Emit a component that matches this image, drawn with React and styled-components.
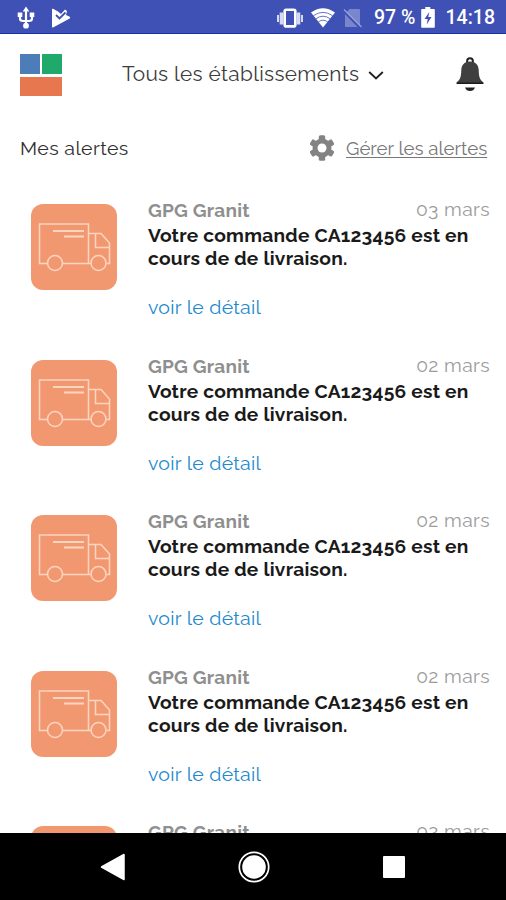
import React from 'react'
import styled, { createGlobalStyle } from 'styled-components'

const alerts = [
    { id: 1, date: '03 mars' },
    { id: 2, date: '02 mars' },
    { id: 3, date: '02 mars' },
    { id: 4, date: '02 mars' },
    { id: 5, date: '02 mars' },
]

const UsbIcon = () => (
    <svg width="18" height="24" viewBox="0 0 18 24" fill="none" stroke="#fff" strokeWidth="2.2">
        <path d="M9 4v15M3 9v3.5q0 2.5 3 2.5h6q3 0 3-2.5V9" />
        <path d="M9 .5l3.3 5H5.7zM.7 6.5h4.6v4.5H.7zM12.7 6.5h4.6v4.5h-4.6z" fill="#fff" stroke="none" />
        <circle cx="9" cy="19.7" r="2.9" fill="#fff" stroke="none" />
    </svg>
)

const PlayIcon = () => (
    <svg width="20" height="20" viewBox="0 0 20 20">
        <path d="M2 .8L7 3.5l3 2.5L14 1.5l2 1.5-1 4 3.7 1.8q1 .8 0 1.6L2.500 19.3q-1.5.7-1.5-.8V1.500q0-1.200 1-.7z" fill="#fff" />
        <path d="M5 7l3.500 3.500L14.500 4.500" fill="none" stroke="#3f51b5" strokeWidth="1.8" />
    </svg>
)

const VibrateIcon = () => (
    <svg width="26" height="20" viewBox="0 0 26 20">
        <path d="M0 7h2v7H0zM2.700 4.500h3.600v12H2.700zM19.700 4.500h3.600v12h-3.600zM24 7h2v7h-2z" fill="#d5daf4" />
        <rect x="7.700" y="1.800" width="10.600" height="16.600" rx="1.500" fill="none" stroke="#fff" strokeWidth="2.600" />
    </svg>
)

const WifiIcon = () => (
    <svg width="24" height="20" viewBox="0 0 24 20">
        <path d="M0 4.600Q12-4 24 4.600L12 19.500z" fill="#fff" />
        <path d="M2.500 7.600q9.500-6.500 19 0M5 10.700q7-5 14 0M7.500 13.800q4.500-3.200 9 0" fill="none" stroke="#3f51b5" strokeWidth=".8" />
    </svg>
)

const NoSimIcon = () => (
    <svg width="20" height="20" viewBox="0 0 20 20">
        <path d="M6.500 1H16q1 0 1 1v17H2V6z" fill="#7985cd" />
        <path d="M0 2.500L17 20" stroke="#3f51b5" strokeWidth="2" />
        <path d="M1 1.500L18.500 19" stroke="#97a1da" strokeWidth="1.300" />
    </svg>
)

const BatteryIcon = () => (
    <svg width="14" height="21" viewBox="0 0 14 21">
        <path d="M4.300 0h5v2H13q.8 0 .8.8V20q0 .8-.8.8H1q-.8 0-.8-.8V2.800Q.2 2 1 2h3.300z" fill="#fff" />
        <path d="M8.300 5L3.500 12h3.200l-1 5.500L10.500 10H7.300z" fill="#3f51b5" />
    </svg>
)

const Chevron = () => (
    <svg width="16" height="13" viewBox="0 0 16 13" fill="none" stroke="#222" strokeWidth="1.900">
        <path d="M1.200 4L8 10.500L14.800 4" />
    </svg>
)

const BellIcon = () => (
    <svg width="28" height="35" viewBox="0 0 28 35">
        <circle cx="14" cy="4.200" r="2.900" fill="none" stroke="#222" strokeWidth="2" />
        <path d="M14 4.500c5.500 0 8.500 3.500 8.700 8.500.2 7 1 9.500 4.600 12.200V27H.7v-1.800C4.300 22.500 5.100 20 5.300 13c.2-5 3.200-8.500 8.700-8.500z" fill="#3f3f3f" />
        <path d="M.7 25.500h26.600V27H.7z" fill="#1c1c1c" />
        <path d="M9 30.500h10q-1.300 3.500-5 3.500T9 30.500z" fill="#222" />
    </svg>
)

const GearIcon = () => (
    <svg width="24" height="26" viewBox="0 0 24 26">
        <g fill="#838383">
            <rect x="8.800" y=".3" width="6.400" height="25.400" rx="1.500" />
            <rect x="8.800" y=".3" width="6.400" height="25.400" rx="1.500" transform="rotate(60 12 13)" />
            <rect x="8.800" y=".3" width="6.400" height="25.400" rx="1.500" transform="rotate(-60 12 13)" />
            <circle cx="12" cy="13" r="9.500" />
        </g>
        <circle cx="12" cy="13" r="4.500" fill="#fff" />
    </svg>
)

const TruckIcon = () => (
    <svg width="86" height="86" viewBox="0 0 86 86" fill="none" stroke="#fcd5c1" strokeWidth="1.500">
        <path d="M16.500 59.500H8.500V20h49v39.500H31.500M57.500 29.500H70L78.500 39v20.500H75.500M60.500 59.500H57.500" />
        <path d="M64.500 29.500V43.500H78.500" />
        <path d="M22 27h31M33 32.500h20" strokeWidth="2" />
        <circle cx="24" cy="59" r="7.500" />
        <circle cx="67.500" cy="59" r="7.500" />
    </svg>
)

const App = () => {
    return (
        <>
            <GlobalStyle />
            <Screen>
                <StatusBar>
                    <StatusGroup $gap="16px">
                        <UsbIcon />
                        <PlayIcon />
                    </StatusGroup>
                    <StatusGroup $gap="8px">
                        <VibrateIcon />
                        <WifiIcon />
                        <NoSimIcon />
                        <Percent>97 %</Percent>
                        <BatteryIcon />
                        <Clock>14:18</Clock>
                    </StatusGroup>
                </StatusBar>

                <Header>
                    <Logo>
                        <LogoBlock $color="#4c7db8" />
                        <LogoBlock $color="#1faa6b" />
                        <LogoBlock $color="#e6774e" $wide />
                    </Logo>
                    <Selector>
                        <SelectorLabel>Tous les établissements</SelectorLabel>
                        <Chevron />
                    </Selector>
                    <BellIcon />
                </Header>

                <TitleRow>
                    <Title>Mes alertes</Title>
                    <Manage>
                        <GearIcon />
                        <ManageLink>Gérer les alertes</ManageLink>
                    </Manage>
                </TitleRow>

                <AlertList>
                    {alerts.map((alert) => (
                        <Alert key={alert.id}>
                            <Tile>
                                <TruckIcon />
                            </Tile>
                            <AlertBody>
                                <AlertTop>
                                    <Sender>GPG Granit</Sender>
                                    <AlertDate>{alert.date}</AlertDate>
                                </AlertTop>
                                <Message>Votre commande CA123456 est en cours de de livraison.</Message>
                                <Detail>voir le détail</Detail>
                            </AlertBody>
                        </Alert>
                    ))}
                </AlertList>

                <NavBar>
                    <svg width="26" height="28" viewBox="0 0 26 28">
                        <path d="M1.500 14L24 1.500v25z" fill="#fff" stroke="#fff" strokeWidth="1.500" strokeLinejoin="round" />
                    </svg>
                    <HomeKey>
                        <svg width="32" height="32" viewBox="0 0 32 32">
                            <circle cx="16" cy="16" r="14.700" fill="none" stroke="#fff" strokeWidth="1.700" />
                            <circle cx="16" cy="16" r="11.800" fill="#fff" />
                        </svg>
                    </HomeKey>
                    <RecentKey />
                </NavBar>
            </Screen>
        </>
    )
}

const GlobalStyle = createGlobalStyle`
* {
    box-sizing: border-box;
}

body {
    margin: 0;
    background: #fff;
    font-family: "Raleway", "Lato", sans-serif;
}

svg {
    display: block;
    flex-shrink: 0;
}
`

const Screen = styled.div`
    display: flex;
    flex-direction: column;
    width: 506px;
    height: 900px;
    overflow: hidden;
    background: #fff;
`

const StatusBar = styled.div`
    display: flex;
    justify-content: space-between;
    height: 34px;
    padding: 0 11px 0 17px;
    background: #3f51b5;
    border-bottom: 1px solid #1730a8;
`

const StatusGroup = styled.div`
    display: flex;
    align-items: center;
    gap: ${(props) => props.$gap};
    padding-top: 2px;
    font-family: "Roboto", sans-serif;
    font-size: 19.5px;
    font-weight: 500;
    color: #fff;
    white-space: nowrap;
`

const Percent = styled.span`
    width: 41px;
    margin-left: 3px;
    margin-right: -2px;
    font-size: 19.5px;
`

const Clock = styled.span`
    width: 50px;
    margin-left: 2px;
    text-align: right;
`

const Header = styled.header`
    display: flex;
    align-items: center;
    justify-content: space-between;
    height: 81px;
    padding: 0 22px 0 20px;
`

const Logo = styled.div`
    display: grid;
    grid-template-columns: 20px 20px;
    grid-template-rows: 20px 19px;
    gap: 3px 2px;
`

const LogoBlock = styled.div`
    grid-column: ${(props) => (props.$wide ? 'span 2' : 'auto')};
    background: ${(props) => props.$color};
`

const Selector = styled.div`
    display: flex;
    align-items: center;
    gap: 8px;
    margin-right: 12px;
`

const SelectorLabel = styled.span`
    width: 238px;
    margin-top: -2px;
    font-size: 20.8px;
    line-height: 26px;
    letter-spacing: 0.33px;
    color: #3c3c3c;
    white-space: nowrap;
`

const TitleRow = styled.div`
    display: flex;
    align-items: center;
    justify-content: space-between;
    height: 66px;
    padding: 0 18px 0 20px;
`

const Title = styled.h1`
    margin: 0;
    font-size: 19.5px;
    font-weight: 400;
    letter-spacing: 0.4px;
    color: #303030;
`

const Manage = styled.div`
    display: flex;
    align-items: center;
    gap: 12px;
`

const ManageLink = styled.a`
    width: 142px;
    font-size: 18.7px;
    color: #777;
    white-space: nowrap;
    text-decoration: underline;
    text-decoration-thickness: 1px;
    text-underline-offset: 2px;
`

const AlertList = styled.div`
    flex: 1;
    min-height: 0;
    padding-top: 17px;
    overflow: hidden;
`

const Alert = styled.div`
    display: flex;
    gap: 31px;
    height: 155.6px;
    padding: 0 16px 0 31px;
`

const Tile = styled.div`
    flex-shrink: 0;
    width: 86px;
    height: 86px;
    margin-top: 6px;
    background: #f29871;
    border-radius: 12px;
`

const AlertBody = styled.div`
    flex: 1;
    min-width: 0;
`

const AlertTop = styled.div`
    display: flex;
    justify-content: space-between;
    height: 25px;
    line-height: 24px;
`

const Sender = styled.span`
    font-size: 19px;
    font-weight: 700;
    letter-spacing: 0.22px;
    color: #8f8f8f;
`

const AlertDate = styled.span`
    font-size: 19.3px;
    line-height: 23px;
    letter-spacing: 0.4px;
    color: #9b9b9b;
`

const Message = styled.p`
    margin: 1px 0 0;
    font-size: 19.2px;
    font-weight: 700;
    line-height: 23px;
    letter-spacing: 0.23px;
    color: #1a1a1a;
`

const Detail = styled.a`
    display: block;
    margin-top: 26px;
    font-size: 19.5px;
    line-height: 24px;
    letter-spacing: 0.28px;
    color: #2189cd;
`

const NavBar = styled.nav`
    display: flex;
    align-items: center;
    justify-content: space-between;
    height: 67px;
    padding: 0 101px 0 100px;
    background: #000;
`

const HomeKey = styled.div`
    padding-right: 2px;
`

const RecentKey = styled.div`
    width: 22px;
    height: 22px;
    background: #fff;
    border-radius: 1px;
`

export default App
